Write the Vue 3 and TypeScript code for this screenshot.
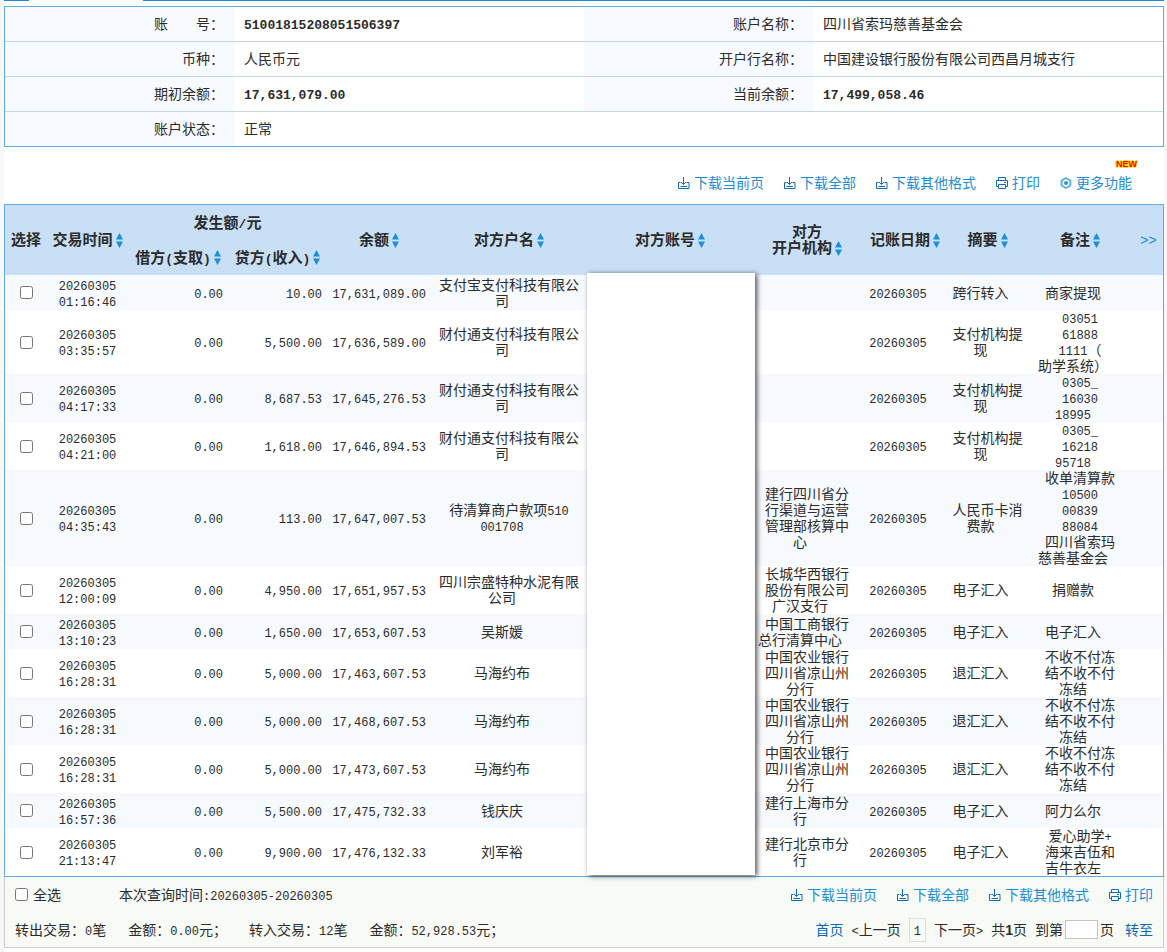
<script setup lang="ts">
import { h, type FunctionalComponent } from 'vue'

interface Transaction {
  time: string[]
  debit: string
  credit: string
  balance: string
  name: string[]
  branch: string[]
  date: string
  summary: string[]
  remark: string[]
}

interface Action {
  label: string
  icon: 'download' | 'print' | 'more'
  isNew?: boolean
}

// Wraps runs of half-width characters so they use the fixed-width numeral face.
const Mixed: FunctionalComponent<{ text: string }> = (props) =>
  props.text
    .split(/([\x21-\x7e]+)/)
    .filter((part) => part !== '')
    .map((part) => (/^[\x21-\x7e]/.test(part) ? h('span', { class: 'half' }, part) : part))
Mixed.props = ['text']

const SortMark: FunctionalComponent = () =>
  h('svg', { class: 'sort-mark', viewBox: '0 0 7 15', 'aria-hidden': 'true' }, [
    h('path', { d: 'M3.5 0L7 6.5H0z M0 8.5H7L3.5 15z', fill: '#1c8fd6' }),
  ])

const ActionIcon: FunctionalComponent<{ name: string }> = (props) => {
  const box = { class: 'action-icon', viewBox: '0 0 12 12', 'aria-hidden': 'true' }
  if (props.name === 'download') {
    return h('svg', box, [
      h('path', {
        d: 'M5.5 0V7.5 M3 5L5.5 7.5L8 5 M2.5 5.5H.5V11.5H11V5.5H8.5 M2.5 9.5H9',
        fill: 'none',
        stroke: '#1068b3',
        'stroke-width': '1',
      }),
    ])
  }
  if (props.name === 'print') {
    return h('svg', box, [
      h('path', {
        d: 'M2.5 3.5V.5H9.5V3.5 M2.5 9.5H.5V3.5H11.5V9.5H9.5 M2.5 7.5H9.5V11.5H2.5z M8 5.5H10',
        fill: 'none',
        stroke: '#1068b3',
        'stroke-width': '1',
      }),
    ])
  }
  return h('svg', box, [
    h('path', {
      d: 'M6 1L10.4 3.5V8.5L6 11L1.6 8.5V3.5z',
      fill: 'none',
      stroke: '#5aaee0',
      'stroke-width': '2',
      'stroke-linejoin': 'round',
    }),
    h('circle', { cx: 6, cy: 6, r: 2, fill: '#2c93d4' }),
  ])
}
ActionIcon.props = ['name']

const downloads: Action[] = [
  { label: '下载当前页', icon: 'download' },
  { label: '下载全部', icon: 'download' },
  { label: '下载其他格式', icon: 'download' },
  { label: '打印', icon: 'print' },
]
const toolbar: Action[] = [...downloads, { label: '更多功能', icon: 'more', isNew: true }]

const day = '20260305'
const alipay = ['支付宝支付科技有限公', '司']
const tenpay = ['财付通支付科技有限公', '司']
const abc = ['中国农业银行', '四川省凉山州', '分行']
const frozen = ['不收不付冻', '结不收不付', '冻结']
const withdraw = ['支付机构提', '现']

const rows: Transaction[] = [
  { time: [day, '01:16:46'], debit: '0.00', credit: '10.00', balance: '17,631,089.00', name: alipay, branch: [], date: day, summary: ['跨行转入'], remark: ['商家提现'] },
  { time: [day, '03:35:57'], debit: '0.00', credit: '5,500.00', balance: '17,636,589.00', name: tenpay, branch: [], date: day, summary: withdraw, remark: ['03051', '61888', '1111（', '助学系统）'] },
  { time: [day, '04:17:33'], debit: '0.00', credit: '8,687.53', balance: '17,645,276.53', name: tenpay, branch: [], date: day, summary: withdraw, remark: ['0305_', '16030', '18995'] },
  { time: [day, '04:21:00'], debit: '0.00', credit: '1,618.00', balance: '17,646,894.53', name: tenpay, branch: [], date: day, summary: withdraw, remark: ['0305_', '16218', '95718'] },
  { time: [day, '04:35:43'], debit: '0.00', credit: '113.00', balance: '17,647,007.53', name: ['待清算商户款项510', '001708'], branch: ['建行四川省分', '行渠道与运营', '管理部核算中', '心'], date: day, summary: ['人民币卡消', '费款'], remark: ['收单清算款', '10500', '00839', '88084', '四川省索玛', '慈善基金会'] },
  { time: [day, '12:00:09'], debit: '0.00', credit: '4,950.00', balance: '17,651,957.53', name: ['四川宗盛特种水泥有限', '公司'], branch: ['长城华西银行', '股份有限公司', '广汉支行'], date: day, summary: ['电子汇入'], remark: ['捐赠款'] },
  { time: [day, '13:10:23'], debit: '0.00', credit: '1,650.00', balance: '17,653,607.53', name: ['吴斯媛'], branch: ['中国工商银行', '总行清算中心'], date: day, summary: ['电子汇入'], remark: ['电子汇入'] },
  { time: [day, '16:28:31'], debit: '0.00', credit: '5,000.00', balance: '17,463,607.53', name: ['马海约布'], branch: abc, date: day, summary: ['退汇汇入'], remark: frozen },
  { time: [day, '16:28:31'], debit: '0.00', credit: '5,000.00', balance: '17,468,607.53', name: ['马海约布'], branch: abc, date: day, summary: ['退汇汇入'], remark: frozen },
  { time: [day, '16:28:31'], debit: '0.00', credit: '5,000.00', balance: '17,473,607.53', name: ['马海约布'], branch: abc, date: day, summary: ['退汇汇入'], remark: frozen },
  { time: [day, '16:57:36'], debit: '0.00', credit: '5,500.00', balance: '17,475,732.33', name: ['钱庆庆'], branch: ['建行上海市分', '行'], date: day, summary: ['电子汇入'], remark: ['阿力么尔'] },
  { time: [day, '21:13:47'], debit: '0.00', credit: '9,900.00', balance: '17,476,132.33', name: ['刘军裕'], branch: ['建行北京市分', '行'], date: day, summary: ['电子汇入'], remark: ['爱心助学+', '海来吉伍和', '吉牛衣左'] },
]
</script>

<template>
  <main class="page" lang="zh-CN">
    <div class="tab-line"><span class="before"></span><span class="after"></span></div>

    <table class="account">
      <colgroup>
        <col class="c-label" /><col class="c-value" /><col class="c-label" /><col class="c-value" />
      </colgroup>
      <tbody>
        <tr>
          <th scope="row">账　　号：</th>
          <td><strong><Mixed text="51001815208051506397" /></strong></td>
          <th scope="row">账户名称：</th>
          <td>四川省索玛慈善基金会</td>
        </tr>
        <tr>
          <th scope="row">币种：</th>
          <td>人民币元</td>
          <th scope="row">开户行名称：</th>
          <td>中国建设银行股份有限公司西昌月城支行</td>
        </tr>
        <tr>
          <th scope="row">期初余额：</th>
          <td><strong><Mixed text="17,631,079.00" /></strong></td>
          <th scope="row">当前余额：</th>
          <td><strong><Mixed text="17,499,058.46" /></strong></td>
        </tr>
        <tr>
          <th scope="row">账户状态：</th>
          <td colspan="3">正常</td>
        </tr>
      </tbody>
    </table>

    <div class="toolbar">
      <a v-for="a in toolbar" :key="a.label" class="action" href="#">
        <ActionIcon :name="a.icon" />{{ a.label }}
        <span v-if="a.isNew" class="badge">NEW</span>
      </a>
    </div>

    <div class="list">
      <table class="records">
        <colgroup>
          <col class="w-pick" /><col class="w-time" /><col class="w-debit" /><col class="w-credit" />
          <col class="w-balance" /><col class="w-name" /><col class="w-account" /><col class="w-branch" />
          <col class="w-date" /><col class="w-summary" /><col class="w-remark" /><col class="w-more" />
        </colgroup>
        <thead>
          <tr>
            <th rowspan="2">选择</th>
            <th rowspan="2"><button class="sort">交易时间<SortMark /></button></th>
            <th colspan="2"><Mixed text="发生额/元" /></th>
            <th rowspan="2"><button class="sort">余额<SortMark /></button></th>
            <th rowspan="2"><button class="sort">对方户名<SortMark /></button></th>
            <th rowspan="2"><button class="sort">对方账号<SortMark /></button></th>
            <th rowspan="2">对方<br /><button class="sort">开户机构<SortMark /></button></th>
            <th rowspan="2"><button class="sort">记账日期<SortMark /></button></th>
            <th rowspan="2"><button class="sort">摘要<SortMark /></button></th>
            <th rowspan="2"><button class="sort">备注<SortMark /></button></th>
            <th rowspan="2"><a class="expand" href="#">&gt;&gt;</a></th>
          </tr>
          <tr>
            <th><button class="sort"><span><Mixed text="借方(支取)" /></span><SortMark /></button></th>
            <th><button class="sort"><span><Mixed text="贷方(收入)" /></span><SortMark /></button></th>
          </tr>
        </thead>
        <tbody>
          <tr v-for="(r, i) in rows" :key="i">
            <td><input type="checkbox" :aria-label="'选择 ' + r.time.join(' ')" /></td>
            <td><span v-for="l in r.time" :key="l" class="line"><Mixed :text="l" /></span></td>
            <td class="amount"><Mixed :text="r.debit" /></td>
            <td class="amount"><Mixed :text="r.credit" /></td>
            <td class="amount"><Mixed :text="r.balance" /></td>
            <td class="tail"><span v-for="l in r.name" :key="l" class="line"><Mixed :text="l" /></span></td>
            <td></td>
            <td class="tail"><span v-for="l in r.branch" :key="l" class="line">{{ l }}</span></td>
            <td class="tail"><span class="line"><Mixed :text="r.date" /></span></td>
            <td class="tail"><span v-for="l in r.summary" :key="l" class="line">{{ l }}</span></td>
            <td class="tail"><span v-for="l in r.remark" :key="l" class="line"><Mixed :text="l" /></span></td>
            <td></td>
          </tr>
        </tbody>
      </table>
      <div class="cover"></div>
    </div>

    <footer class="footer">
      <div class="bar">
        <label class="all"><input type="checkbox" />全选</label>
        <span><Mixed text="本次查询时间:20260305-20260305" /></span>
        <div class="actions">
          <a v-for="a in downloads" :key="a.label" class="action" href="#">
            <ActionIcon :name="a.icon" />{{ a.label }}
          </a>
        </div>
      </div>
      <div class="bar">
        <div class="totals">
          <span><Mixed text="转出交易：0笔" /></span>
          <span><Mixed text="金额：0.00元；" /></span>
          <span><Mixed text="转入交易：12笔" /></span>
          <span><Mixed text="金额：52,928.53元；" /></span>
        </div>
        <nav class="pager">
          <a class="go" href="#">首页</a>
          <button><Mixed text="<上一页" /></button>
          <span class="current"><Mixed text="1" /></span>
          <button><Mixed text="下一页>" /></button>
          <span>共<strong>1</strong>页</span>
          <label class="jump">到第<input type="text" />页</label>
          <button class="go jump-to">转至</button>
        </nav>
      </div>
    </footer>
  </main>
</template>

<style>
body {
  margin: 0;
  background: #f8f8f8;
}
.half {
  font-family: 'Liberation Mono', monospace;
  font-size: 12px;
  line-height: 1;
}
strong .half,
th .half {
  font-size: 13px;
}
.sort-mark {
  width: 7px;
  height: 15px;
  flex: none;
}
.action-icon {
  width: 12px;
  height: 12px;
  flex: none;
}
</style>

<style scoped>
.page {
  min-height: 100vh;
  box-sizing: border-box;
  margin: 0 3px 0 4px;
  background: #fff;
  color: #2b2b2b;
  font: 14px/16px 'Liberation Sans', 'Noto Sans CJK SC', sans-serif;
}
.tab-line {
  display: flex;
  justify-content: space-between;
  gap: 114px;
  height: 1px;
  margin-bottom: 5px;
}
.before {
  width: 25px;
  background: #1e8bd0;
}
.after {
  flex: 1;
  background: #1e8bd0;
}
table {
  width: 100%;
  table-layout: fixed;
  border-collapse: separate;
  border-spacing: 0;
}
th,
td {
  padding: 0;
}
a {
  color: #1c8cd4;
  text-decoration: none;
}
button {
  padding: 0;
  border: 0;
  background: none;
  color: inherit;
  font: inherit;
  cursor: pointer;
}
input[type='checkbox'] {
  width: 13px;
  height: 13px;
  margin: 0;
}

.account {
  border: 1px solid #62aae4;
}
.c-label {
  width: 229px;
}
.c-value {
  width: 350px;
}
.account th,
.account td {
  box-sizing: border-box;
  height: 35px;
  padding: 0 10px;
  border-bottom: 1px solid #c5d7e8;
}
.account tr:last-child > * {
  height: 34px;
  border-bottom: 0;
}
.account th {
  background: #f7fbff;
  font-weight: normal;
  text-align: right;
}

.toolbar {
  display: flex;
  justify-content: flex-end;
  gap: 20px;
  padding: 28px 32px 13px 0;
}
.action {
  position: relative;
  display: flex;
  align-items: center;
  gap: 4px;
}
.badge {
  position: absolute;
  top: -16px;
  right: -5px;
  color: #f00;
  font: bold 9px/10px 'Liberation Sans', sans-serif;
  text-shadow: 1px 0 #fd0, -1px 0 #fd0, 0 1px #fd0, 0 -1px #fd0;
}

.list {
  position: relative;
  border: 1px solid #62aae4;
}
.w-pick { width: 42px; }
.w-time { width: 81px; }
.w-debit { width: 100px; }
.w-credit { width: 99px; }
.w-balance { width: 104px; }
.w-name { width: 156px; }
.w-account { width: 166px; }
.w-branch { width: 108px; }
.w-date { width: 88px; }
.w-summary { width: 77px; }
.w-remark { width: 108px; }
.w-more { width: 29px; }
.records th {
  height: 35px;
  background: #c8dff5;
  font-size: 15px;
  font-weight: bold;
  text-align: center;
}
.sort {
  display: inline-flex;
  align-items: center;
  gap: 3px;
  height: 16px;
  vertical-align: top;
}
.expand {
  font-size: 14px;
  font-weight: normal;
}
.records td {
  height: 35px;
  text-align: center;
}
.records tbody tr:nth-child(odd) {
  background: #f6fafd;
}
.records td > input {
  display: block;
  margin: 0 auto;
}
.records .amount {
  padding-right: 5px;
  text-align: right;
}
.line {
  display: block;
  height: 16px;
  white-space: nowrap;
}
.tail .line:last-child {
  padding-right: 14px;
}
.cover {
  position: absolute;
  top: 68px;
  bottom: 1px;
  left: 50.26%;
  width: 14.5%;
  background: #fff;
  box-shadow: 2px 1px 5px rgba(0, 0, 0, 0.7);
}

.footer {
  border: 1px solid #ccc;
  border-top: 0;
  background: #f8faf5;
}
.bar {
  display: flex;
  align-items: center;
  height: 35px;
  padding: 0 10px;
}
.all {
  display: flex;
  align-items: center;
  gap: 5px;
  margin-right: 58px;
}
.actions {
  display: flex;
  gap: 20px;
  margin-left: auto;
}
.totals {
  display: flex;
  gap: 22px;
}
.pager {
  display: flex;
  align-items: center;
  gap: 8px;
  margin-left: auto;
}
.go {
  color: #0d68b4;
}
.current {
  padding: 3px 4px;
  border: 1px solid #ddd;
}
.jump {
  display: flex;
  align-items: center;
  gap: 2px;
}
.jump input {
  box-sizing: border-box;
  width: 33px;
  height: 19px;
  padding: 0 2px;
  border: 1px solid #c4c4c4;
  background: #fff;
  font: inherit;
}
.jump-to {
  margin-left: 3px;
}
</style>
